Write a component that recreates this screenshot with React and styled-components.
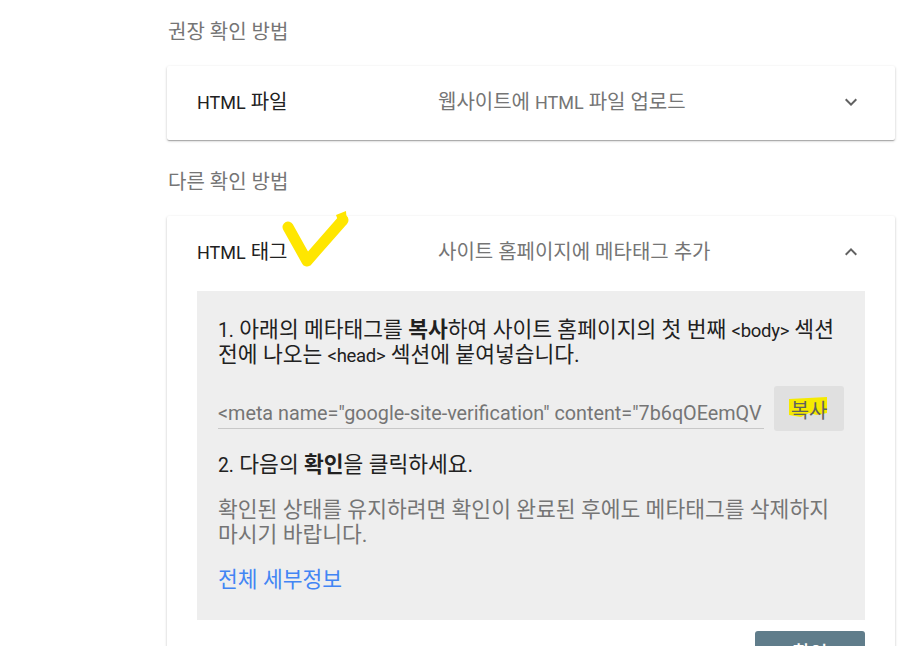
import React from "react";
import styled, { createGlobalStyle } from "styled-components";

const Global = createGlobalStyle`
  html, body { margin: 0; padding: 0; background: #fff; }
  body { font-family: Roboto, "Noto Sans CJK KR", sans-serif; color: #212121; }
  * { box-sizing: border-box; }
`;

const Page = styled.div`
  width: 919px;
  height: 646px;
  overflow: hidden;
  padding: 20px 24px 0 167px;
  display: flex;
  flex-direction: column;
`;

const SectionLabel = styled.div`
  font-size: 20px;
  line-height: 24px;
  color: #757575;
  padding-left: 1px;
  margin-top: ${(p) => p.$top || 0}px;
  margin-bottom: 22px;
`;

const Card = styled.div`
  width: 728px;
  background: #fff;
  border-radius: 2px;
  box-shadow: 0 1px 1px rgba(0,0,0,0.14), 0 2px 1px -1px rgba(0,0,0,0.12), 0 1px 3px rgba(0,0,0,0.2);
  flex-shrink: 0;
`;

const Header = styled.div`
  position: relative;
  height: ${(p) => p.$h}px;
  display: grid;
  grid-template-columns: 241px 1fr 24px;
  align-items: center;
  padding: 0 32px 3px 30px;
`;

const Title = styled.div`
  font-size: 20px;
  line-height: 24px;
  color: #212121;
`;

const Desc = styled.div`
  font-size: 20px;
  line-height: 24px;
  color: #757575;
`;

const Lat = styled.span`
  font-size: ${(p) => p.$size || "0.9em"};
  line-height: 1;
`;

const Chevron = ({ up }) => (
  <svg width="24" height="24" viewBox="0 0 24 24" fill="#616161">
    {up ? (
      <path d="M7.41 15.41 12 10.83l4.59 4.58L18 14l-6-6-6 6z" />
    ) : (
      <path d="M7.41 8.59 12 13.17l4.59-4.58L18 10l-6 6-6-6z" />
    )}
  </svg>
);

const Check = styled.svg`
  position: absolute;
  left: 113px;
  top: -5px;
  pointer-events: none;
`;

const Body = styled.div`
  padding: 0 30px;
`;

const Box = styled.div`
  background: #eeeeee;
  padding: 26px 21px 28px 21px;
  display: flex;
  flex-direction: column;
`;

const Para = styled.p`
  margin: 0;
  font-size: 21.5px;
  line-height: 25px;
  white-space: nowrap;
  color: ${(p) => (p.$muted ? "#757575" : "#212121")};
  margin-top: ${(p) => p.$top || 0}px;
`;

const Code = styled.span`
  font-size: 18.5px;
  line-height: 1;
  letter-spacing: -0.3px;
`;

const InputRow = styled.div`
  display: flex;
  align-items: flex-start;
  gap: 10px;
  margin-top: 19px;
`;

const MetaInput = styled.div`
  width: 548px;
  margin-top: 16px;
  font-size: 19.8px;
  line-height: 24px;
  color: #757575;
  white-space: nowrap;
  overflow: hidden;
  border-bottom: 1px solid #c8c8c8;
  padding-bottom: 2px;
`;

const CopyButton = styled.div`
  position: relative;
  width: 70px;
  height: 45px;
  background: #e0e0e0;
  border-radius: 3px;
  display: flex;
  align-items: center;
  justify-content: center;
  font-size: 20px;
  color: #616161;
`;

const Highlight = styled.svg`
  position: absolute;
  left: 13px;
  top: 9px;
`;

const CopyText = styled.span`
  position: relative;
  margin-top: 1px;
`;

const Link = styled.a`
  margin-top: 20px;
  font-size: 21.5px;
  line-height: 25px;
  color: #4285f4;
  text-decoration: none;
`;

const Footer = styled.div`
  display: flex;
  justify-content: flex-end;
  padding: 11px 30px 0 0;
`;

const PrimaryButton = styled.div`
  width: 110px;
  height: 40px;
  background: #607d8b;
  border-radius: 3px;
  color: #fff;
  font-size: 19px;
  display: flex;
  align-items: center;
  justify-content: center;
  font-weight: 500;
`;

export default function App() {
  return (
    <>
      <Global />
      <Page>
        <SectionLabel>권장 확인 방법</SectionLabel>
        <Card>
          <Header $h={74}>
            <Title><Lat>HTML</Lat> 파일</Title>
            <Desc>웹사이트에 <Lat>HTML</Lat> 파일 업로드</Desc>
            <Chevron />
          </Header>
        </Card>
        <SectionLabel $top={30}>다른 확인 방법</SectionLabel>
        <Card>
          <Header $h={75}>
            <Title><Lat>HTML</Lat> 태그</Title>
            <Desc>사이트 홈페이지에 메타태그 추가</Desc>
            <Chevron up />
            <Check width="72" height="62" viewBox="0 0 72 62">
              <path
                d="M8 16 L27 50 L63 9"
                fill="none"
                stroke="#ffe600"
                strokeWidth="11"
                strokeLinecap="round"
                strokeLinejoin="round"
              />
              <path d="M56 4 L66 0 L67 13 L60 15 Z" fill="#ffe600" />
            </Check>
          </Header>
          <Body>
            <Box>
              <Para>
                <Lat>1.</Lat> 아래의 메타태그를 <b>복사</b>하여 사이트 홈페이지의 첫 번째 <Code>&lt;body&gt;</Code> 섹션
                <br />
                전에 나오는 <Code>&lt;head&gt;</Code> 섹션에 붙여넣습니다.
              </Para>
              <InputRow>
                <MetaInput>&lt;meta name="google-site-verification" content="7b6qOEemQV</MetaInput>
                <CopyButton>
                  <Highlight width="42" height="24" viewBox="0 0 42 24">
                    <path d="M2 4 L40 2 L40 18 L30 20 L22 18 L14 22 L2 20 Z" fill="#f5ea00" />
                  </Highlight>
                  <CopyText>복사</CopyText>
                </CopyButton>
              </InputRow>
              <Para $top={21}>
                <Lat>2.</Lat> 다음의 <b>확인</b>을 클릭하세요.
              </Para>
              <Para $muted $top={20}>
                확인된 상태를 유지하려면 확인이 완료된 후에도 메타태그를 삭제하지
                <br />
                마시기 바랍니다.
              </Para>
              <Link href="#">전체 세부정보</Link>
            </Box>
          </Body>
          <Footer>
            <PrimaryButton>확인</PrimaryButton>
          </Footer>
        </Card>
      </Page>
    </>
  );
}
